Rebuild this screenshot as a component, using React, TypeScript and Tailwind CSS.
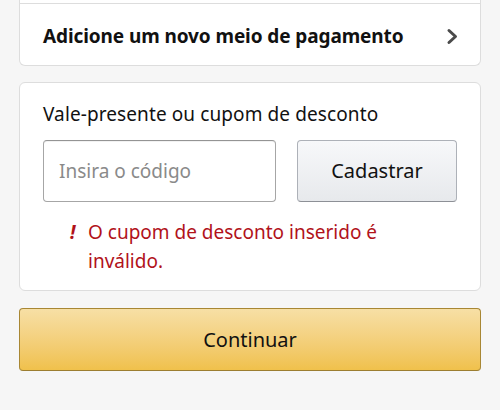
export default function App() {
  return (
    <div
      className="min-h-[418px] w-[500px] bg-[#f6f6f6] px-[19px] text-[#111]"
      style={{ fontFamily: '"Noto Sans", Roboto, sans-serif' }}
    >
      {/* payment methods card (continues above) */}
      <div className="-mt-2 rounded-b-[6px] border border-t-0 border-[#dddddd] bg-white">
        <div className="h-3 border-b border-[#dddddd]" />
        <div className="flex h-[61px] items-center justify-between pl-[23px] pr-[21px] pt-[3px]">
          <span className="text-[19px] font-bold tracking-[-0.1px]">Adicione um novo meio de pagamento</span>
          <svg width="13" height="17" viewBox="0 0 13 17" fill="none">
            <path d="M3 2.5 L9.5 8.5 L3 14.5" stroke="#4a4a4a" strokeWidth="3" strokeLinecap="round" strokeLinejoin="round" />
          </svg>
        </div>
      </div>

      {/* coupon card */}
      <div className="mt-[16px] rounded-[6px] border border-[#dddddd] bg-white px-[23px] pb-[14px] pt-[18px]">
        <div className="text-[19px] leading-[26px] tracking-[0.1px]">Vale-presente ou cupom de desconto</div>
        <div className="mt-[13px] flex gap-[21px]">
          <input
            placeholder="Insira o código"
            className="h-[62px] w-[233px] rounded-[4px] border border-[#a6a6a6] border-t-[#949494] bg-white px-[15px] text-[19px] shadow-[inset_0_1px_0_rgba(0,0,0,0.05)] outline-none placeholder:text-[#8a8a8a]"
          />
          <button className="h-[62px] w-[160px] rounded-[4px] border border-[#adb1b8] border-b-[#8d9096] bg-gradient-to-b from-[#f7f8fa] to-[#e7e9ec] text-[20px] text-[#111]">
            Cadastrar
          </button>
        </div>
        <div className="mt-[16px] flex pl-[27px] text-[19px] leading-[29px] text-[#b1121a]">
          <span className="w-[18px] font-bold italic">!</span>
          <span className="w-[300px]">O cupom de desconto inserido é inválido.</span>
        </div>
      </div>

      {/* continue */}
      <button className="mt-[17px] flex h-[63px] w-full items-center justify-center rounded-[4px] border border-[#a88734] border-b-[#9c7e31] bg-gradient-to-b from-[#f7dfa5] to-[#f0c14b] text-[20px] text-[#111]">
        Continuar
      </button>
    </div>
  );
}
